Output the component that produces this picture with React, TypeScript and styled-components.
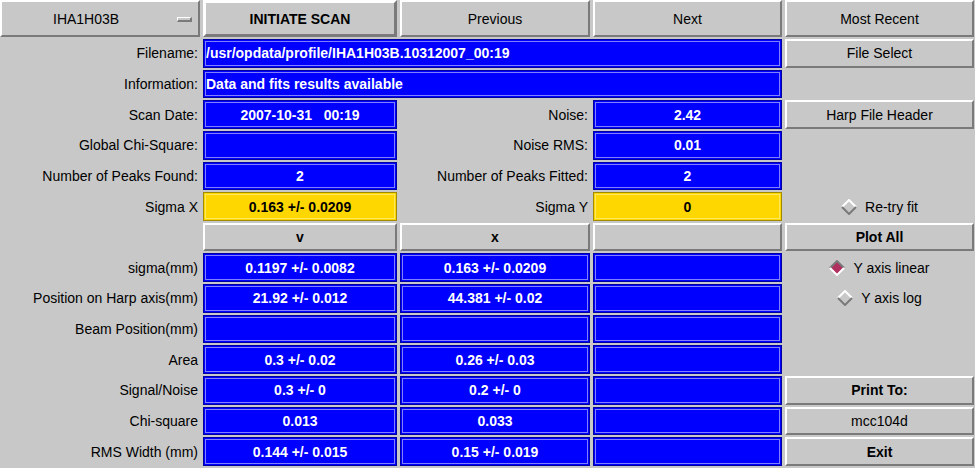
import React from "react";
import styled, { createGlobalStyle, css } from "styled-components";

const Global = createGlobalStyle`
  html, body { margin: 0; padding: 0; background: #c8c8c8; }
  body { font-family: "Liberation Sans", Arial, sans-serif; }
`;

const Panel = styled.div`
  width: 975px;
  height: 468px;
  box-sizing: border-box;
  padding-bottom: 2px;
  background: #c8c8c8;
  display: grid;
  grid-template-columns: 200px 194px 190px 189px 189px;
  grid-template-rows: 37px repeat(14, 1fr);
  column-gap: 3px;
  row-gap: 2px;
  font-size: 14px;
  color: #000;
  overflow: hidden;
`;

const Label = styled.div`
  display: flex;
  align-items: center;
  justify-content: flex-end;
  padding-right: 2px;
  white-space: nowrap;
`;

const Empty = styled.div``;

const Field = styled.div<{ $span?: number; $left?: boolean; $yellow?: boolean }>`
  grid-column: span ${(p) => p.$span ?? 1};
  display: flex;
  align-items: center;
  justify-content: ${(p) => (p.$left ? "flex-start" : "center")};
  padding-left: ${(p) => (p.$left ? "2px" : "0")};
  box-sizing: border-box;
  font-weight: bold;
  white-space: pre;
  ${(p) =>
    p.$yellow
      ? css`
          background: #ffd700;
          color: #000;
          border: 1px solid #a08a00;
          box-shadow: inset 0 0 0 1px #ffd700, inset 0 0 0 2px #ffe860;
        `
      : css`
          background: #0000ff;
          color: #fff;
          border: 1px solid #0000a0;
          box-shadow: inset 0 0 0 1px #0000ff, inset 0 0 0 2px #8080ff;
        `}
`;

const Button = styled.button<{ $bold?: boolean; $thick?: boolean }>`
  margin: 0;
  padding: 0;
  box-sizing: border-box;
  background: #c8c8c8;
  font-family: "Liberation Sans", Arial, sans-serif;
  font-size: 14px;
  font-weight: ${(p) => (p.$bold ? "bold" : "normal")};
  color: #000;
  border-style: solid;
  border-width: ${(p) => (p.$thick ? "3px" : "2px")};
  border-color: #ffffff #7a7a7a #7a7a7a #ffffff;
  display: flex;
  align-items: center;
  justify-content: center;
  white-space: nowrap;
`;

const OptionMenu = styled(Button)`
  position: relative;
  justify-content: flex-start;
  padding-left: 51px;
`;

const Indicator = styled.span`
  position: absolute;
  right: 6px;
  top: 15px;
  width: 15px;
  height: 5px;
  box-sizing: border-box;
  border-style: solid;
  border-width: 1px 2px 2px 1px;
  border-color: #ffffff #7a7a7a #7a7a7a #ffffff;
  background: #c8c8c8;
`;

const Toggle = styled.div`
  display: flex;
  align-items: center;
  justify-content: center;
  gap: 8px;
  white-space: nowrap;
`;

const Diamond = ({ on }: { on?: boolean }) => (
  <svg width="16" height="16" viewBox="0 0 16 16">
    <polygon points="8,1 15,8 8,15 1,8" fill={on ? "#b03060" : "#c8c8c8"} />
    <polyline points="1,8 8,1 15,8" fill="none" stroke={on ? "#7a7a7a" : "#ffffff"} strokeWidth="2" />
    <polyline points="1,8 8,15 15,8" fill="none" stroke={on ? "#ffffff" : "#7a7a7a"} strokeWidth="2" />
  </svg>
);

const Radio = ({ label, on }: { label: string; on?: boolean }) => (
  <Toggle>
    <Diamond on={on} />
    <span>{label}</span>
  </Toggle>
);

type Row = { label: string; v: string; x: string };
const results: Row[] = [
  { label: "sigma(mm)", v: "0.1197 +/- 0.0082", x: "0.163 +/- 0.0209" },
  { label: "Position on Harp axis(mm)", v: "21.92 +/- 0.012", x: "44.381 +/- 0.02" },
  { label: "Beam Position(mm)", v: "", x: "" },
  { label: "Area", v: "0.3 +/- 0.02", x: "0.26 +/- 0.03" },
  { label: "Signal/Noise", v: "0.3 +/- 0", x: "0.2 +/- 0" },
  { label: "Chi-square", v: "0.013", x: "0.033" },
  { label: "RMS Width (mm)", v: "0.144 +/- 0.015", x: "0.15 +/- 0.019" },
];

const side: React.ReactNode[] = [
  <Radio key="lin" label="Y axis linear" on />,
  <Radio key="log" label="Y axis log" />,
  <Empty key="e1" />,
  <Empty key="e2" />,
  <Button key="pt" $bold>Print To:</Button>,
  <Button key="mcc">mcc104d</Button>,
  <Button key="exit" $bold>Exit</Button>,
];

export default function App() {
  return (
    <>
      <Global />
      <Panel>
        <OptionMenu>
          IHA1H03B
          <Indicator />
        </OptionMenu>
        <Button $bold $thick>INITIATE SCAN</Button>
        <Button>Previous</Button>
        <Button>Next</Button>
        <Button>Most Recent</Button>

        <Label>Filename:</Label>
        <Field $span={3} $left>/usr/opdata/profile/IHA1H03B.10312007_00:19</Field>
        <Button>File Select</Button>

        <Label>Information:</Label>
        <Field $span={3} $left>Data and fits results available</Field>
        <Empty />

        <Label>Scan Date:</Label>
        <Field>2007-10-31   00:19</Field>
        <Label>Noise:</Label>
        <Field>2.42</Field>
        <Button>Harp File Header</Button>

        <Label>Global Chi-Square:</Label>
        <Field />
        <Label>Noise RMS:</Label>
        <Field>0.01</Field>
        <Empty />

        <Label>Number of Peaks Found:</Label>
        <Field>2</Field>
        <Label>Number of Peaks Fitted:</Label>
        <Field>2</Field>
        <Empty />

        <Label>Sigma X</Label>
        <Field $yellow>0.163 +/- 0.0209</Field>
        <Label>Sigma Y</Label>
        <Field $yellow>0</Field>
        <Radio label="Re-try fit" />

        <Empty />
        <Button $bold>v</Button>
        <Button $bold>x</Button>
        <Button />
        <Button $bold>Plot All</Button>

        {results.map((r, i) => (
          <React.Fragment key={r.label}>
            <Label>{r.label}</Label>
            <Field>{r.v}</Field>
            <Field>{r.x}</Field>
            <Field />
            {side[i]}
          </React.Fragment>
        ))}
      </Panel>
    </>
  );
}
